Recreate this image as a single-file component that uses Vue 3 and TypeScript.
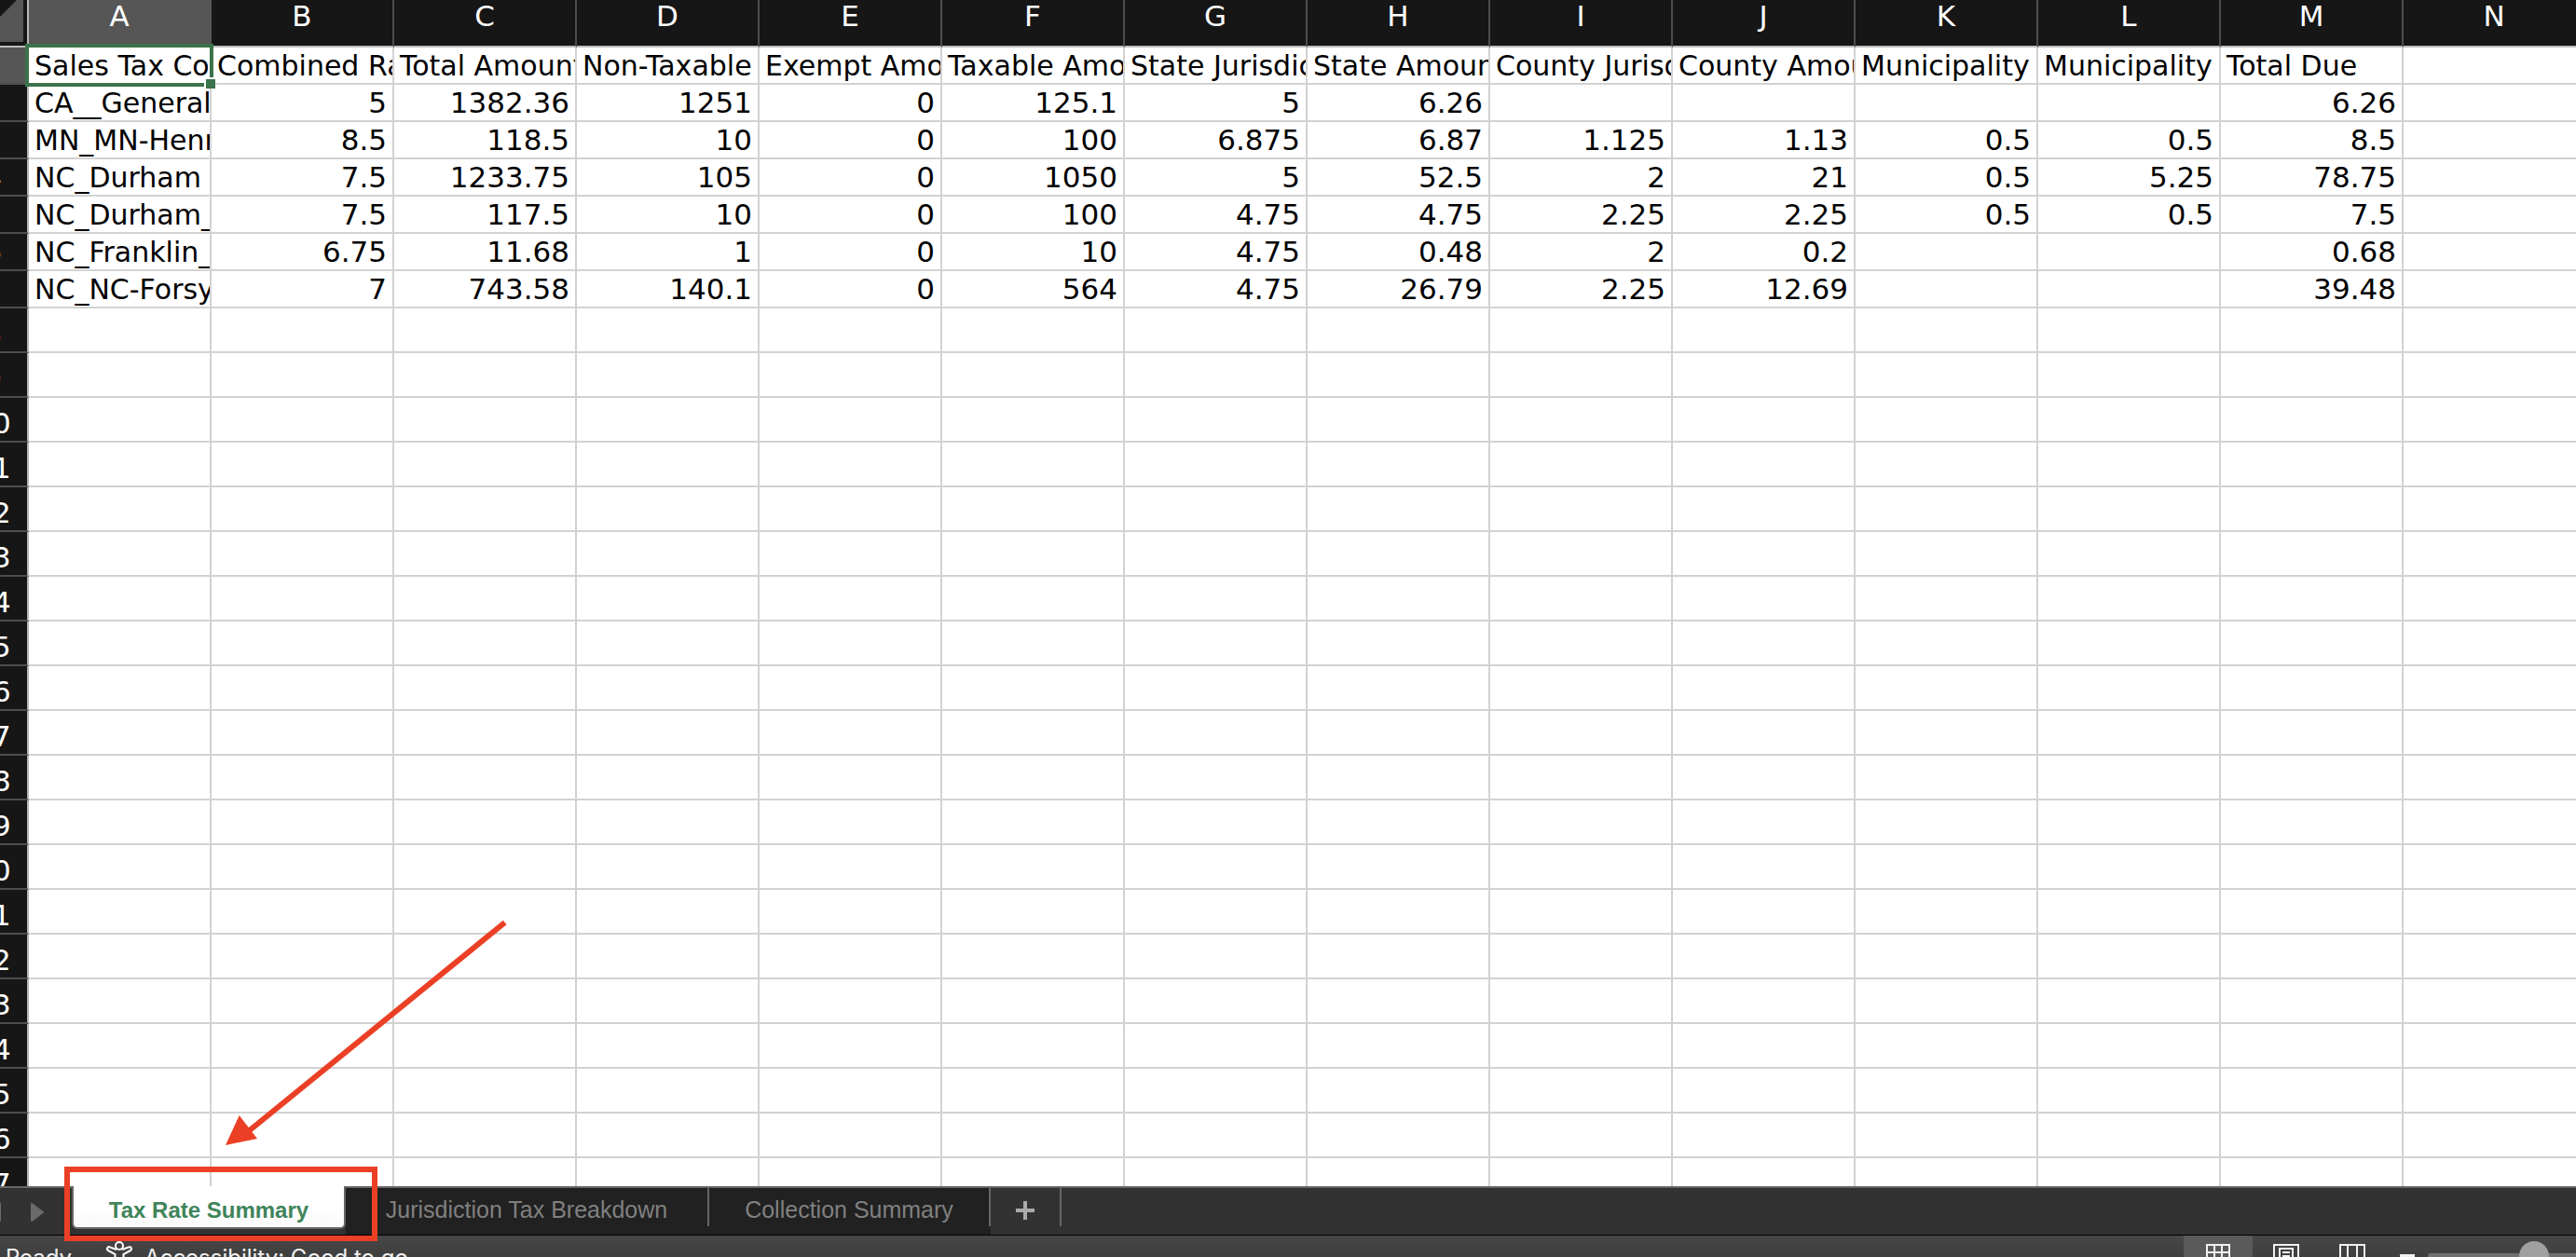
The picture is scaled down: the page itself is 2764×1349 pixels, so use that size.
<script setup lang="ts">
import { ref } from 'vue'

type Cell = string | number | null

const columns: string[] = 'ABCDEFGHIJKLMN'.split('')
const headings: string[] = [
  'Sales Tax Code', 'Combined Rate', 'Total Amount', 'Non-Taxable Amount', 'Exempt Amount',
  'Taxable Amount', 'State Jurisdiction', 'State Amount', 'County Jurisdiction', 'County Amount',
  'Municipality Jurisdiction', 'Municipality Amount', 'Total Due',
]
const records: Cell[][] = [
  ['CA__General', 5, 1382.36, 1251, 0, 125.1, 5, 6.26, null, null, null, null, 6.26],
  ['MN_MN-Hennepin', 8.5, 118.5, 10, 0, 100, 6.875, 6.87, 1.125, 1.13, 0.5, 0.5, 8.5],
  ['NC_Durham', 7.5, 1233.75, 105, 0, 1050, 5, 52.5, 2, 21, 0.5, 5.25, 78.75],
  ['NC_Durham_Durham', 7.5, 117.5, 10, 0, 100, 4.75, 4.75, 2.25, 2.25, 0.5, 0.5, 7.5],
  ['NC_Franklin_County', 6.75, 11.68, 1, 0, 10, 4.75, 0.48, 2, 0.2, null, null, 0.68],
  ['NC_NC-Forsyth', 7, 743.58, 140.1, 0, 564, 4.75, 26.79, 2.25, 12.69, null, null, 39.48],
]
const filled: Cell[][] = [headings, ...records]
const rows = Array.from({ length: 27 }, (_, r) => ({
  number: r + 1,
  compact: r < filled.length,
  cells: columns.map((_, c): Cell => filled[r]?.[c] ?? null),
}))

interface Sheet {
  name: string
  width: number
}
const sheets: Sheet[] = [
  { name: 'Tax Rate Summary', width: 294 },
  { name: 'Jurisdiction Tax Breakdown', width: 390 },
  { name: 'Collection Summary', width: 302 },
]
const current = ref(0)
const zoom = ref(50)
</script>

<template>
  <div class="app">
    <main class="sheet">
      <table class="grid">
        <colgroup>
          <col class="col-num">
          <col v-for="c in columns" :key="c" class="col-data">
        </colgroup>
        <thead>
          <tr>
            <td class="corner"><span class="corner-mark"></span></td>
            <th v-for="(c, i) in columns" :key="c" scope="col" :class="{ picked: i === 0 }">{{ c }}</th>
          </tr>
        </thead>
        <tbody>
          <tr v-for="row in rows" :key="row.number" :class="{ compact: row.compact }">
            <th scope="row" :class="{ picked: row.number === 1 }">{{ row.number }}</th>
            <td
              v-for="(cell, c) in row.cells"
              :key="c"
              :class="{ num: typeof cell === 'number', active: row.number === 1 && c === 0 }"
            >
              <div class="value">{{ cell }}</div>
              <span v-if="row.number === 1 && c === 0" class="selection"><span class="handle"></span></span>
            </td>
          </tr>
        </tbody>
      </table>
    </main>

    <nav class="tabs" aria-label="Sheets">
      <button class="step prev" aria-label="Previous sheet">
        <svg width="14" height="20" viewBox="0 0 14 20"><path d="M13 1v18L1 10z" /></svg>
      </button>
      <button class="step next" aria-label="Next sheet">
        <svg width="14" height="20" viewBox="0 0 14 20"><path d="M1 1v18L13 10z" /></svg>
      </button>
      <button
        v-for="(sheet, i) in sheets"
        :key="sheet.name"
        class="tab"
        :class="{ current: i === current }"
        :style="{ width: sheet.width + 'px' }"
        @click="current = i"
      >
        <span>{{ sheet.name }}</span>
      </button>
      <button class="add" aria-label="Add sheet">
        <svg width="20" height="20" viewBox="0 0 20 20"><path d="M8 0h4v8h8v4h-8v8H8v-8H0V8h8z" /></svg>
      </button>
      <svg class="callout" width="500" height="360" viewBox="0 0 500 360" aria-hidden="true">
        <path d="M481.700 10L203 237" class="line" />
        <path d="M182 249L196.700 217L216 242z" class="head" />
        <rect x="12" y="275" width="330" height="74" class="line" />
      </svg>
    </nav>

    <footer class="status">
      <span class="ready">Ready</span>
      <svg class="access" width="30" height="34" viewBox="0 0 30 34" aria-hidden="true">
        <circle cx="15" cy="6" r="4" />
        <path d="M12 10L5 7.500a2 2 0 0 0-2 3.500L10.500 15v7L7 30a2 2 0 0 0 3.500 1.500L15 23l4.500 8.500A2 2 0 0 0 23 30l-3.500-8v-7L27 11a2 2 0 0 0-2-3.500L18 10" />
      </svg>
      <span class="note">Accessibility: Good to go</span>
      <div class="views">
        <button class="view on" aria-label="Normal view">
          <svg width="28" height="26" viewBox="0 0 28 26"><path d="M2 1h24v24H2zM2 9h24M2 17h24M10 1v24M18 1v24" /></svg>
        </button>
        <button class="view" aria-label="Page layout view">
          <svg width="28" height="26" viewBox="0 0 28 26"><path d="M1 1h26v24H1zM7 25V5h14v20M10 9h8M10 13h8M10 17h8" /></svg>
        </button>
        <button class="view" aria-label="Page break view">
          <svg width="28" height="26" viewBox="0 0 28 26"><path d="M1 1h26v24H1zM9 1v24M19 1v24" /></svg>
        </button>
        <button class="minus" aria-label="Zoom out"></button>
        <input v-model="zoom" class="zoom" type="range" min="0" max="100" aria-label="Zoom">
      </div>
    </footer>
  </div>
</template>

<style>
body {
  margin: 0;
  overflow: hidden;
}
</style>

<style scoped>
.app {
  height: 100vh;
  display: flex;
  flex-direction: column;
  overflow: hidden;
  background: #fff;
}

button {
  margin: 0;
  padding: 0;
  border: 0;
  background: none;
}

/* The view is scrolled slightly right and down of the sheet's origin. */
.sheet {
  flex: 1;
  min-height: 0;
  overflow: hidden;
}
.grid {
  margin: -13px 0 0 -45px;
  width: 2820px;
  table-layout: fixed;
  border-collapse: separate;
  border-spacing: 0;
  font: 30px/36px "DejaVu Sans", Verdana, sans-serif;
  color: #000;
}
.col-num { width: 76px; }
.col-data { width: 196px; }
.grid th,
.grid td {
  box-sizing: border-box;
  padding: 0;
}
.grid th {
  font-size: 31px;
  font-weight: normal;
  line-height: 38px;
  color: #fff;
  background: #161616;
}
.grid thead th,
.grid .corner {
  height: 64px;
  vertical-align: middle;
  border-right: 2px solid #4d4d4d;
  border-bottom: 2px solid #bdbdbd;
}
.grid thead th { padding-bottom: 2px; }
.grid thead .picked {
  background: #565656;
  border-right-color: #565656;
}
.grid .corner {
  background: #161616;
  border-right-color: #b8b5b4;
  vertical-align: bottom;
}
.corner-mark {
  display: block;
  width: 52px;
  height: 52px;
  margin: 0 4px 4px auto;
  background: #565656;
  clip-path: polygon(100% 0, 100% 100%, 0 100%);
}
tbody tr { height: 48px; }
tbody tr.compact { height: 40px; }
tbody th {
  vertical-align: bottom;
  border-right: 2px solid #b8b5b4;
  border-bottom: 2px solid #4d4d4d;
}
.grid tbody .picked { background: #565656; }
tbody td {
  vertical-align: bottom;
  border-right: 2px solid #d2d2d2;
  border-bottom: 2px solid #d2d2d2;
}
.value {
  padding-left: 6px;
  overflow: hidden;
  white-space: nowrap;
}
.num .value {
  padding: 0 6px 0 0;
  font-size: 31px;
  line-height: 38px;
  text-align: right;
}
.active {
  position: relative;
  z-index: 1;
}
.active .value { margin-right: 2px; }
.selection {
  position: absolute;
  inset: -4px;
  border: 4px solid #3b734a;
}
.handle {
  position: absolute;
  right: -6px;
  bottom: -6px;
  width: 10px;
  height: 10px;
  background: #3b734a;
  box-shadow: -2px -2px 0 0 #fff;
}

.tabs {
  position: relative;
  display: flex;
  height: 50px;
  border-top: 2px solid #666;
  border-bottom: 1px solid #000;
  background: #323232;
  font: 25px/28px "Liberation Sans", Arial, sans-serif;
}
.step {
  display: flex;
  align-items: center;
  height: 52px;
}
.step svg { fill: #6b6b6b; stroke: #6b6b6b; stroke-width: 2; stroke-linejoin: round; }
.prev { margin-left: -13px; }
.next { margin: 0 30px 0 32px; }
.tab {
  display: flex;
  background: #212121;
  color: #808080;
  font: inherit;
  white-space: nowrap;
}
.tab span {
  flex: 1;
  box-sizing: border-box;
  height: 41px;
  padding-top: 9px;
  border-right: 2px solid #666;
}
.tab.current {
  background: #323232;
}
.tab.current span {
  height: 46px;
  margin-top: -2px;
  padding-top: 12px;
  border: solid #666;
  border-width: 0 2px 2px;
  border-radius: 0 0 6px 6px;
  background: linear-gradient(#fff 50%, #f9f9f9);
  color: #40845a;
  font-size: 24px;
  font-weight: bold;
}
.add {
  box-sizing: border-box;
  width: 76px;
  height: 41px;
  padding-top: 6px;
  border-right: 2px solid #666;
}
.add svg { display: block; margin: 0 auto; fill: #aaa; }
.callout {
  position: absolute;
  left: 60px;
  bottom: -15px;
  z-index: 2;
  pointer-events: none;
}
.callout .line { fill: none; stroke: #eb4025; stroke-width: 6; }
.callout .head { fill: #eb4025; }

.status {
  flex: none;
  display: flex;
  align-items: center;
  height: 44px;
  margin-bottom: -21px;
  background: linear-gradient(#474747, #363636);
  color: #f0f0f0;
  font: 24px/30px Inter, "Liberation Sans", sans-serif;
  white-space: nowrap;
}
.ready,
.note { padding-top: 4px; }
.ready { margin-left: 6px; }
.access {
  margin-left: 36px;
  fill: none;
  stroke: #fff;
  stroke-width: 2;
}
.note { margin-left: 12px; }
.views {
  display: flex;
  align-items: center;
  height: 44px;
  margin: 0 -69px 0 auto;
}
.view {
  display: flex;
  align-items: center;
  justify-content: center;
  width: 71px;
  height: 44px;
}
.view.on { width: 74px; background: #5a5a5a; }
.view svg { fill: none; stroke: #f0f0f0; stroke-width: 2; }
.minus {
  width: 16px;
  height: 4px;
  margin: 0 14px 0 16px;
  background: #f0f0f0;
}
.zoom {
  appearance: none;
  width: 228px;
  height: 32px;
  margin: 0;
  background: none;
}
.zoom::-webkit-slider-runnable-track {
  height: 6px;
  border-radius: 3px;
  background: #707070;
}
.zoom::-webkit-slider-thumb {
  appearance: none;
  width: 32px;
  height: 32px;
  margin-top: -13px;
  border-radius: 50%;
  background: #a0a0a0;
}
</style>
